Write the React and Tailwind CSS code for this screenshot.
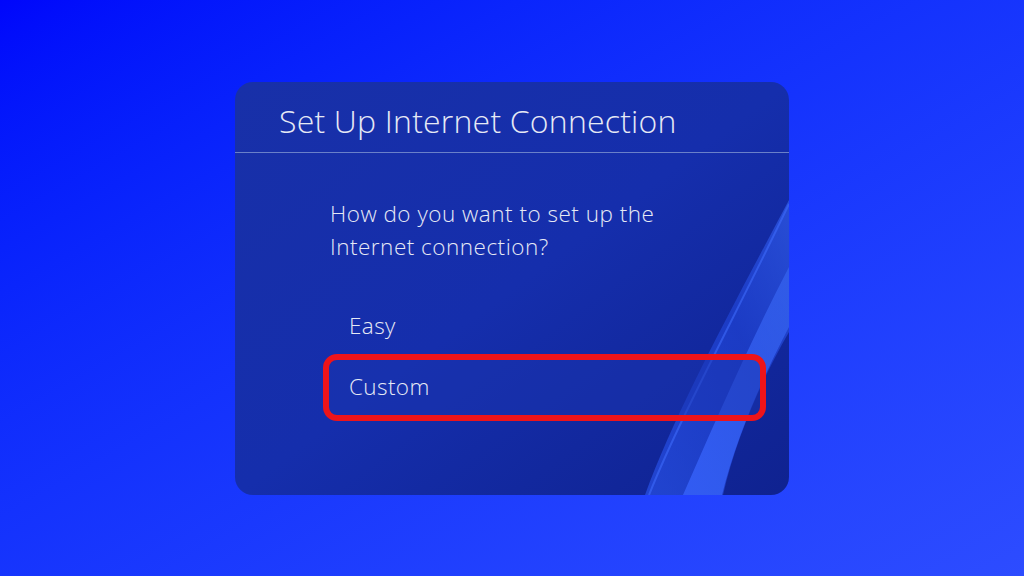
export default function App() {
  const font = { fontFamily: '"Open Sans", "Noto Sans", sans-serif' };
  return (
    <div
      className="w-full h-[576px] flex items-center justify-center bg-gradient-to-br from-[#0006fb] to-[#2d4cff]"
      style={font}
    >
      <div className="relative w-[554px] h-[413px] rounded-[18px] overflow-hidden bg-gradient-to-br from-[#1830a8] via-[#152eac] to-[#0f2290] text-[#e6e9f5]">
        <svg
          className="absolute inset-0 pointer-events-none"
          width="554"
          height="413"
          viewBox="0 0 554 413"
        >
          <defs>
            <linearGradient id="w1" x1="0" y1="1" x2="1" y2="0">
              <stop offset="0" stopColor="#2f5eff" stopOpacity="0.55" />
              <stop offset="0.6" stopColor="#2a58ff" stopOpacity="0.4" />
              <stop offset="1" stopColor="#3a6bff" stopOpacity="0.55" />
            </linearGradient>
            <linearGradient id="w2" x1="0" y1="1" x2="1" y2="0">
              <stop offset="0" stopColor="#3864ff" stopOpacity="0.75" />
              <stop offset="1" stopColor="#3e70ff" stopOpacity="0.5" />
            </linearGradient>
          </defs>
          <path
            d="M410 413 C 440 330, 500 220, 554 118 L 554 250 C 525 300, 500 360, 488 413 Z"
            fill="url(#w1)"
          />
          <path
            d="M414 413 C 445 335, 505 225, 554 122"
            stroke="#3f6dff"
            strokeOpacity="0.55"
            strokeWidth="2"
            fill="none"
          />
          <path
            d="M448 413 C 480 340, 515 260, 554 185 L 554 245 C 525 300, 500 360, 487 413 Z"
            fill="url(#w2)"
          />
        </svg>

        <div className="relative flex flex-col h-full">
          <div className="h-[71px] border-b border-[#6a80c9] flex items-center pl-[44px] pt-[8px]">
            <span className="text-[32px] leading-none font-light tracking-[0.2px]">
              Set Up Internet Connection
            </span>
          </div>

          <div className="pl-[88px] pr-[23px] pt-[44px]">
            <div className="pl-[7px] text-[22.5px] leading-[33px] font-light tracking-[0.5px]">
              How do you want to set up the
              <br />
              Internet connection?
            </div>

            <div className="mt-[36px] flex flex-col">
              <div className="h-[55px] flex items-center pl-[26px] text-[22.5px] font-light tracking-[0.4px]">
                Easy
              </div>
              <div className="h-[67px] flex items-center pl-[20px] text-[22.5px] font-light tracking-[0.4px] border-[6px] border-[#ee141a] rounded-[14px] bg-[#1a33b0]/50">
                Custom
              </div>
            </div>
          </div>
        </div>
      </div>
    </div>
  );
}
